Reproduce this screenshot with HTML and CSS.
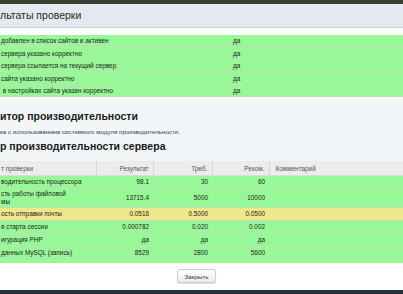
FILE: index.html
```html
<!DOCTYPE html>
<html lang="ru">
  <head>
    <meta charset="UTF-8" />
    <meta name="viewport" content="width=device-width, initial-scale=1.0" />
    <title>Результаты проверки</title>
    <link rel="stylesheet" href="styles.css">
  </head>
  <body>
    <div class="topbar"></div>
    <div class="dialog">
      <div class="dialog-head">льтаты проверки</div>
      <div class="dialog-body">
        <table class="checks">
          <tr><td class="name">добавлен в список сайтов и активен</td><td>да</td></tr>
          <tr><td class="name">сервера указано корректно</td><td>да</td></tr>
          <tr><td class="name">сервера ссылается на текущий сервер</td><td>да</td></tr>
          <tr><td class="name">сайта указано корректно</td><td>да</td></tr>
          <tr><td class="name">&nbsp;в настройках сайта указан корректно</td><td>да</td></tr>
        </table>

        <div class="perf">
          <h2>итор производительности</h2>
          <p>ка с использованием системного модуля производительности.</p>
          <h3>р производительности сервера</h3>
        </div>

        <table class="perf-table">
          <tr class="head">
            <th class="name">т проверки</th>
            <th>Результат</th>
            <th>Треб.</th>
            <th>Реком.</th>
            <th class="comment">Комментарий</th>
          </tr>
          <tr>
            <td class="name">водительность процессора</td>
            <td>98.1</td><td>30</td><td>60</td><td></td>
          </tr>
          <tr class="tall">
            <td class="name">сть работы файловой<br>мы</td>
            <td>13715.4</td><td>5000</td><td>10000</td><td></td>
          </tr>
          <tr class="warn">
            <td class="name">ость отправки почты</td>
            <td>0.0516</td><td>0.5000</td><td>0.0500</td><td></td>
          </tr>
          <tr>
            <td class="name">я старта сессии</td>
            <td>0.000782</td><td>0.020</td><td>0.002</td><td></td>
          </tr>
          <tr>
            <td class="name">игурация PHP</td>
            <td>да</td><td>да</td><td>да</td><td></td>
          </tr>
          <tr>
            <td class="name">данных MySQL (запись)</td>
            <td>8529</td><td>2800</td><td>5600</td><td></td>
          </tr>
          <tr>
            <td class="name">данных MySQL (чтение)</td>
            <td>27491</td><td>3000</td><td>7000</td><td></td>
          </tr>
        </table>
      </div>
      <div class="dialog-foot">
        <button class="btn">Закрыть</button>
      </div>
    </div>
    <div class="bottombar"></div>
  </body>
</html>
```

FILE: styles.css
```css
* {
  margin: 0;
  padding: 0;
  box-sizing: border-box;
}

body {
  width: 403px;
  height: 294px;
  overflow: hidden;
  font-family: "Liberation Sans", Arial, sans-serif;
  color: #1c1c1c;
  background: #fff;
}

.topbar {
  height: 4px;
  background-color: #3b3e33;
}

.dialog-head {
  height: 24px;
  line-height: 23px;
  font-size: 10.5px;
  color: #2b2b2b;
  background-color: #e3e9ee;
  border-bottom: 1px solid #cdd2d6;
}

.dialog-body {
  height: 235px;
  overflow: hidden;
  padding-top: 7px;
  background: #fff;
}

table {
  width: 100%;
  border-collapse: collapse;
  font-size: 6.4px;
}

.checks td {
  height: 12.3px;
  background-color: #98f898;
  border-bottom: 1px solid #bfe0b6;
  padding: 0 0 0 1px;
  vertical-align: middle;
}

.checks td.name {
  width: 232px;
}

.perf {
  height: 64px;
  background-color: #f3f6f8;
  padding-top: 13px;
}

.perf h2,
.perf h3 {
  font-size: 10.5px;
  font-weight: bold;
  color: #1a1a1a;
  line-height: 12px;
}

.perf p {
  font-size: 6.2px;
  color: #3a3a3a;
  margin-top: 6px;
  margin-bottom: 4px;
  line-height: 8px;
}

.perf-table th {
  height: 15px;
  background-color: #ececec;
  color: #555;
  font-weight: normal;
  text-align: right;
  padding: 0 4px;
  border-left: 1px solid #d6d6d6;
  border-bottom: 1px solid #dcdcdc;
}

.perf-table th.name,
.perf-table td.name {
  text-align: left;
  border-left: none;
  padding-left: 1px;
  width: 96px;
}

.perf-table th.comment {
  text-align: left;
  padding-left: 6px;
}

.perf-table th:nth-child(2) { width: 57px; }
.perf-table th:nth-child(3) { width: 59px; }
.perf-table th:nth-child(4) { width: 57px; }

.perf-table td {
  height: 13px;
  background-color: #98f898;
  border-bottom: 1px solid #bfe0b6;
  text-align: right;
  padding: 0 4px;
  line-height: 8px;
}

.perf-table tr.tall td {
  height: 19px;
}

.perf-table tr.warn td {
  background-color: #f0e68c;
}

.dialog-foot {
  height: 27px;
  background: #fff;
  display: flex;
  justify-content: center;
  padding-top: 6px;
  padding-right: 10px;
}

.btn {
  height: 14px;
  width: 39px;
  font-family: "Liberation Sans", Arial, sans-serif;
  font-size: 6.2px;
  color: #333;
  background: linear-gradient(#fff, #e9ecee);
  border: 1px solid #c9cdd1;
  border-radius: 2px;
  box-shadow: 0 1px 1px rgba(0, 0, 0, 0.12);
}

.bottombar {
  height: 4px;
  background-color: #28313b;
}
```
